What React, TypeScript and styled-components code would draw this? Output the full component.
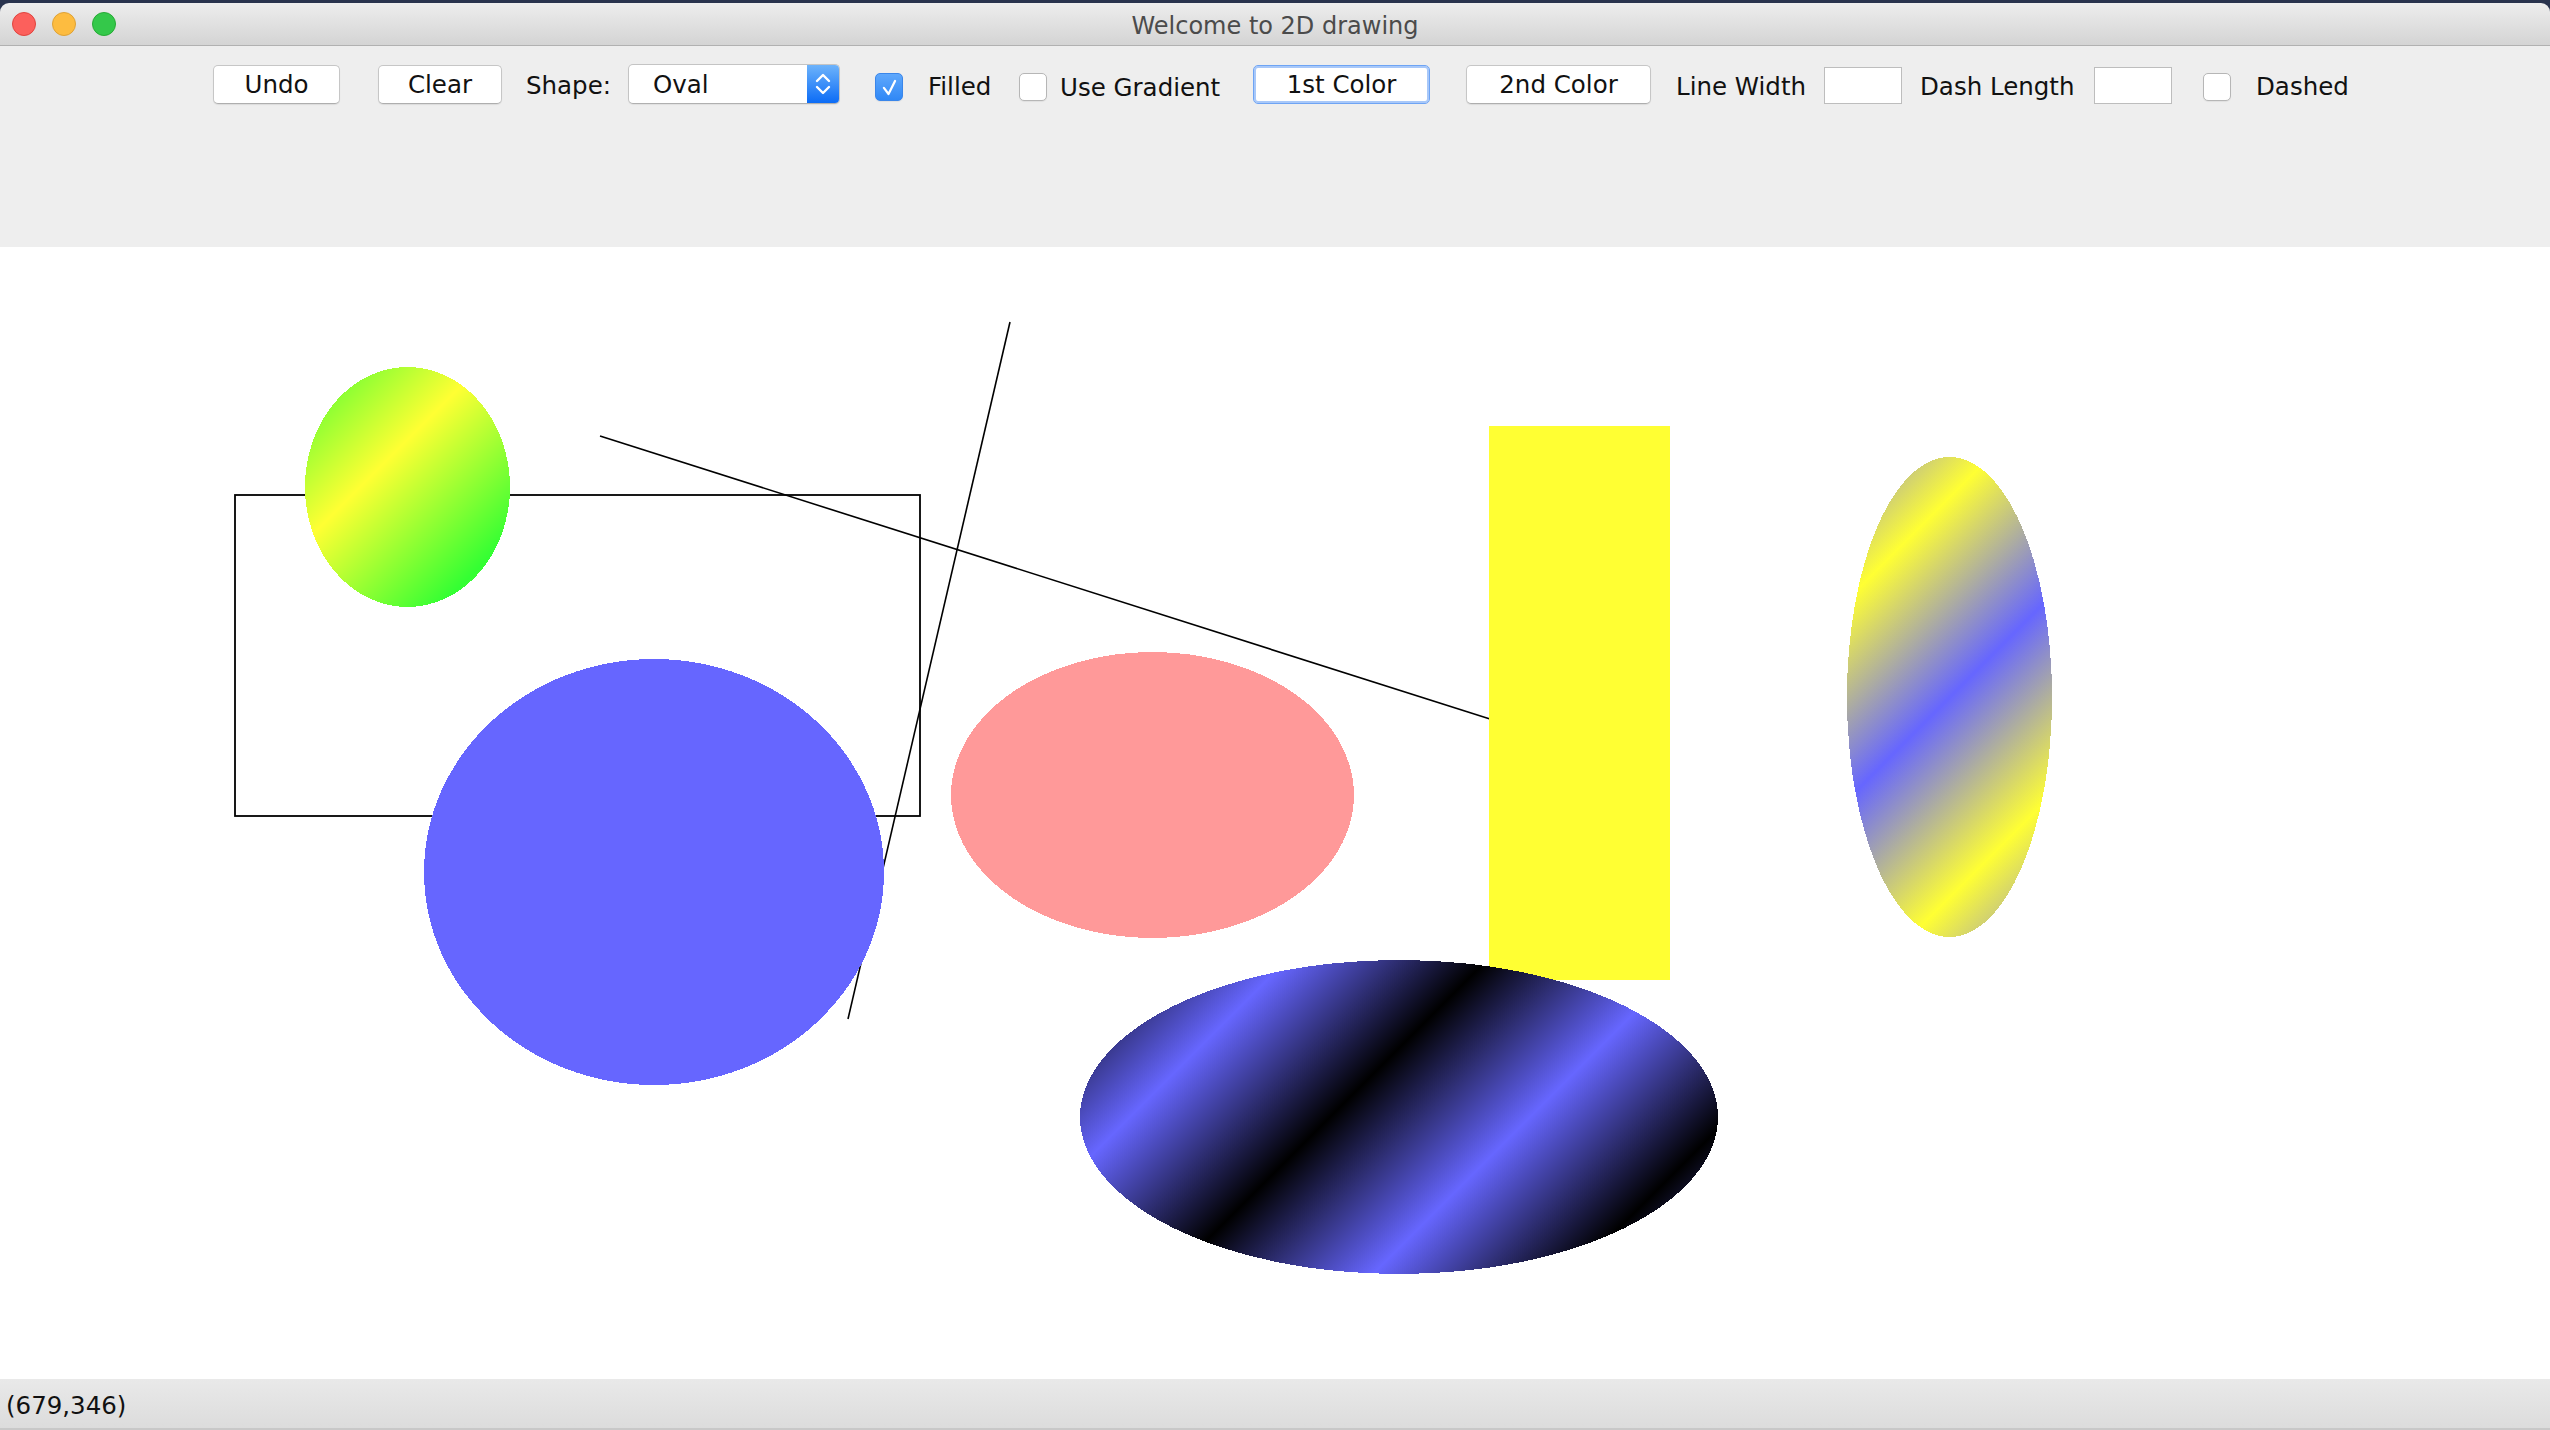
import React from 'react';
import styled, { createGlobalStyle } from 'styled-components';

const Global = createGlobalStyle`
  html, body { margin: 0; padding: 0; background: #29334d; }
  body { font-family: "DejaVu Sans", "Liberation Sans", sans-serif; }
  #root { width: 2550px; height: 1430px; }
  * { box-sizing: border-box; }
`;

const Window = styled.div`
  width: 2550px;
  height: 1430px;
  display: flex;
  flex-direction: column;
  overflow: hidden;
  background: #29334d;
  padding-top: 3px;
`;

const TitleBar = styled.div`
  height: 43px;
  flex: none;
  display: grid;
  grid-template-columns: 1fr auto 1fr;
  align-items: center;
  background: linear-gradient(#ededed, #d4d4d4);
  border-bottom: 1px solid #b1b1b1;
  border-radius: 9px 9px 0 0;
`;

const Lights = styled.div`
  display: flex;
  gap: 16px;
  padding-left: 12px;
`;

const Light = styled.span<{ $c: string; $b: string }>`
  width: 24px;
  height: 24px;
  border-radius: 50%;
  background: ${p => p.$c};
  border: 1px solid ${p => p.$b};
`;

const Title = styled.div`
  font-size: 24px;
  color: #4b4b4b;
  padding-top: 4px;
`;

const Toolbar = styled.div`
  height: 201px;
  flex: none;
  background: #eeeeee;
  padding: 18px 0 0 213px;
`;

const Row = styled.div`
  display: flex;
  align-items: center;
  height: 40px;
`;

const Button = styled.button<{ $w: number; $ml?: number; $focus?: boolean }>`
  width: ${p => p.$w}px;
  height: 39px;
  margin-left: ${p => p.$ml ?? 0}px;
  padding: 1px 0 0;
  background: #ffffff;
  border: 1px solid ${p => (p.$focus ? '#6ea4f4' : '#c6c6c6')};
  border-bottom-color: ${p => (p.$focus ? '#6ea4f4' : '#aeaeae')};
  border-radius: 5px;
  box-shadow: ${p => (p.$focus ? 'inset 0 0 0 2px #a8c8f9' : '0 1px 1px rgba(0,0,0,0.08)')};
  font-family: "DejaVu Sans", "Liberation Sans", sans-serif;
  font-size: 24.5px;
  color: #111111;
  display: flex;
  align-items: center;
  justify-content: center;
`;

const Label = styled.span<{ $w: number; $ml?: number; $drop?: number }>`
  width: ${p => p.$w}px;
  margin-left: ${p => p.$ml ?? 0}px;
  height: 40px;
  line-height: ${p => 43 + (p.$drop ?? 0) * 2}px;
  font-size: 24.5px;
  color: #111111;
  white-space: nowrap;
`;

const Select = styled.div<{ $ml: number }>`
  margin-left: ${p => p.$ml}px;
  width: 212px;
  height: 40px;
  display: flex;
  background: #ffffff;
  border: 1px solid #c4c4c4;
  border-bottom-color: #b0b0b0;
  border-radius: 5px;
  overflow: hidden;
  box-shadow: 0 1px 1px rgba(0,0,0,0.06);
`;

const SelectText = styled.span`
  flex: 1;
  padding-left: 24px;
  font-size: 24.5px;
  line-height: 40px;
  color: #111111;
`;

const SelectArrows = styled.span`
  width: 32px;
  display: flex;
  align-items: center;
  justify-content: center;
  background: linear-gradient(#6db3fb, #0c6cf6);
`;

const CheckOption = styled.label<{ $ml: number; $gap: number }>`
  margin-left: ${p => p.$ml}px;
  display: flex;
  align-items: center;
  gap: ${p => p.$gap}px;
`;

const Box = styled.span<{ $on?: boolean }>`
  width: 28px;
  height: 28px;
  margin-top: 6px;
  border-radius: 5px;
  display: flex;
  align-items: center;
  justify-content: center;
  background: ${p => (p.$on ? 'linear-gradient(#5fa8fc, #3088f6)' : '#ffffff')};
  border: 1px solid ${p => (p.$on ? '#3a86ea' : '#b6b6b6')};
  box-shadow: 0 1px 1px rgba(0,0,0,0.06);
`;

const Field = styled.div<{ $ml: number }>`
  margin-left: ${p => p.$ml}px;
  width: 78px;
  height: 37px;
  margin-top: 3px;
  background: #ffffff;
  border: 1px solid #bdbdbd;
`;

const Canvas = styled.div`
  flex: 1;
  background: #ffffff;
`;

const Drawing = styled.svg`
  display: block;
`;

const StatusBar = styled.div`
  height: 51px;
  flex: none;
  background: linear-gradient(#e9e9e9, #dcdcdc);
  border-bottom: 2px solid #c8c8c8;
  padding-left: 6px;
  font-size: 24.5px;
  line-height: 54px;
  color: #111111;
`;

const Check = () => (
  <svg width="28" height="28" viewBox="0 0 28 28">
    <path d="M8.5 15 L13.5 21.5 L20.5 7.5" fill="none" stroke="#ffffff" strokeWidth="2.4" strokeLinecap="round" strokeLinejoin="round" />
  </svg>
);

const Arrows = () => (
  <svg width="20" height="30" viewBox="0 0 20 30">
    <path d="M4 12 L10 6 L16 12" fill="none" stroke="#ffffff" strokeWidth="2.4" strokeLinecap="round" strokeLinejoin="round" />
    <path d="M4 18 L10 24 L16 18" fill="none" stroke="#ffffff" strokeWidth="2.4" strokeLinecap="round" strokeLinejoin="round" />
  </svg>
);

type Grad = { id: string; c1: string; c2: string };
const grads: Grad[] = [
  { id: 'gGreen', c1: '#33ff33', c2: '#ffff33' },
  { id: 'gYB', c1: '#6666ff', c2: '#ffff33' },
  { id: 'gDark', c1: '#6666ff', c2: '#000000' },
];

const Scene = () => (
  <Drawing width="2550" height="1132" viewBox="0 0 2550 1132">
    <defs>
      {grads.map(g => (
        <linearGradient key={g.id} id={g.id} gradientUnits="userSpaceOnUse" x1="0" y1="0" x2="100" y2="100" spreadMethod="reflect">
          <stop offset="0" stopColor={g.c1} />
          <stop offset="1" stopColor={g.c2} />
        </linearGradient>
      ))}
    </defs>
    <rect x="235" y="248" width="685" height="321" fill="none" stroke="#000" strokeWidth="1.8" />
    <line x1="600" y1="189" x2="1490" y2="472" stroke="#000" strokeWidth="1.6" />
    <line x1="1010" y1="75" x2="848" y2="772" stroke="#000" strokeWidth="1.6" />
    <ellipse cx="407.5" cy="240" rx="102.5" ry="120" fill="url(#gGreen)" shapeRendering="crispEdges" />
    <ellipse cx="654" cy="625" rx="230" ry="213" fill="#6666ff" shapeRendering="crispEdges" />
    <ellipse cx="1152.5" cy="548" rx="201.5" ry="143" fill="#ff9999" shapeRendering="crispEdges" />
    <rect x="1489" y="179" width="181" height="554" fill="#ffff33" />
    <ellipse cx="1949.5" cy="450" rx="102.5" ry="240" fill="url(#gYB)" shapeRendering="crispEdges" />
    <ellipse cx="1399" cy="870" rx="319" ry="157" fill="url(#gDark)" shapeRendering="crispEdges" />
  </Drawing>
);

export default function App() {
  return (
    <>
      <Global />
      <Window>
        <TitleBar>
          <Lights>
            <Light $c="#fc605c" $b="#e0443e" />
            <Light $c="#fdbc40" $b="#dea236" />
            <Light $c="#34c84a" $b="#27aa35" />
          </Lights>
          <Title>Welcome to 2D drawing</Title>
          <span />
        </TitleBar>
        <Toolbar>
          <Row>
            <Button $w={127}>Undo</Button>
            <Button $w={124} $ml={38}>Clear</Button>
            <Label $w={80} $ml={24}>Shape:</Label>
            <Select $ml={22}>
              <SelectText>Oval</SelectText>
              <SelectArrows><Arrows /></SelectArrows>
            </Select>
            <CheckOption $ml={35} $gap={25}>
              <Box $on><Check /></Box>
              <Label $w={66} $drop={1}>Filled</Label>
            </CheckOption>
            <CheckOption $ml={25} $gap={13}>
              <Box />
              <Label $w={158} $drop={2}>Use Gradient</Label>
            </CheckOption>
            <Button $w={177} $ml={35} $focus>1st Color</Button>
            <Button $w={185} $ml={36}>2nd Color</Button>
            <Label $w={130} $ml={25} $drop={1}>Line Width</Label>
            <Field $ml={18} />
            <Label $w={156} $ml={18} $drop={1}>Dash Length</Label>
            <Field $ml={18} />
            <CheckOption $ml={31} $gap={25}>
              <Box />
              <Label $w={92} $drop={1}>Dashed</Label>
            </CheckOption>
          </Row>
        </Toolbar>
        <Canvas>
          <Scene />
        </Canvas>
        <StatusBar>(679,346)</StatusBar>
      </Window>
    </>
  );
}
